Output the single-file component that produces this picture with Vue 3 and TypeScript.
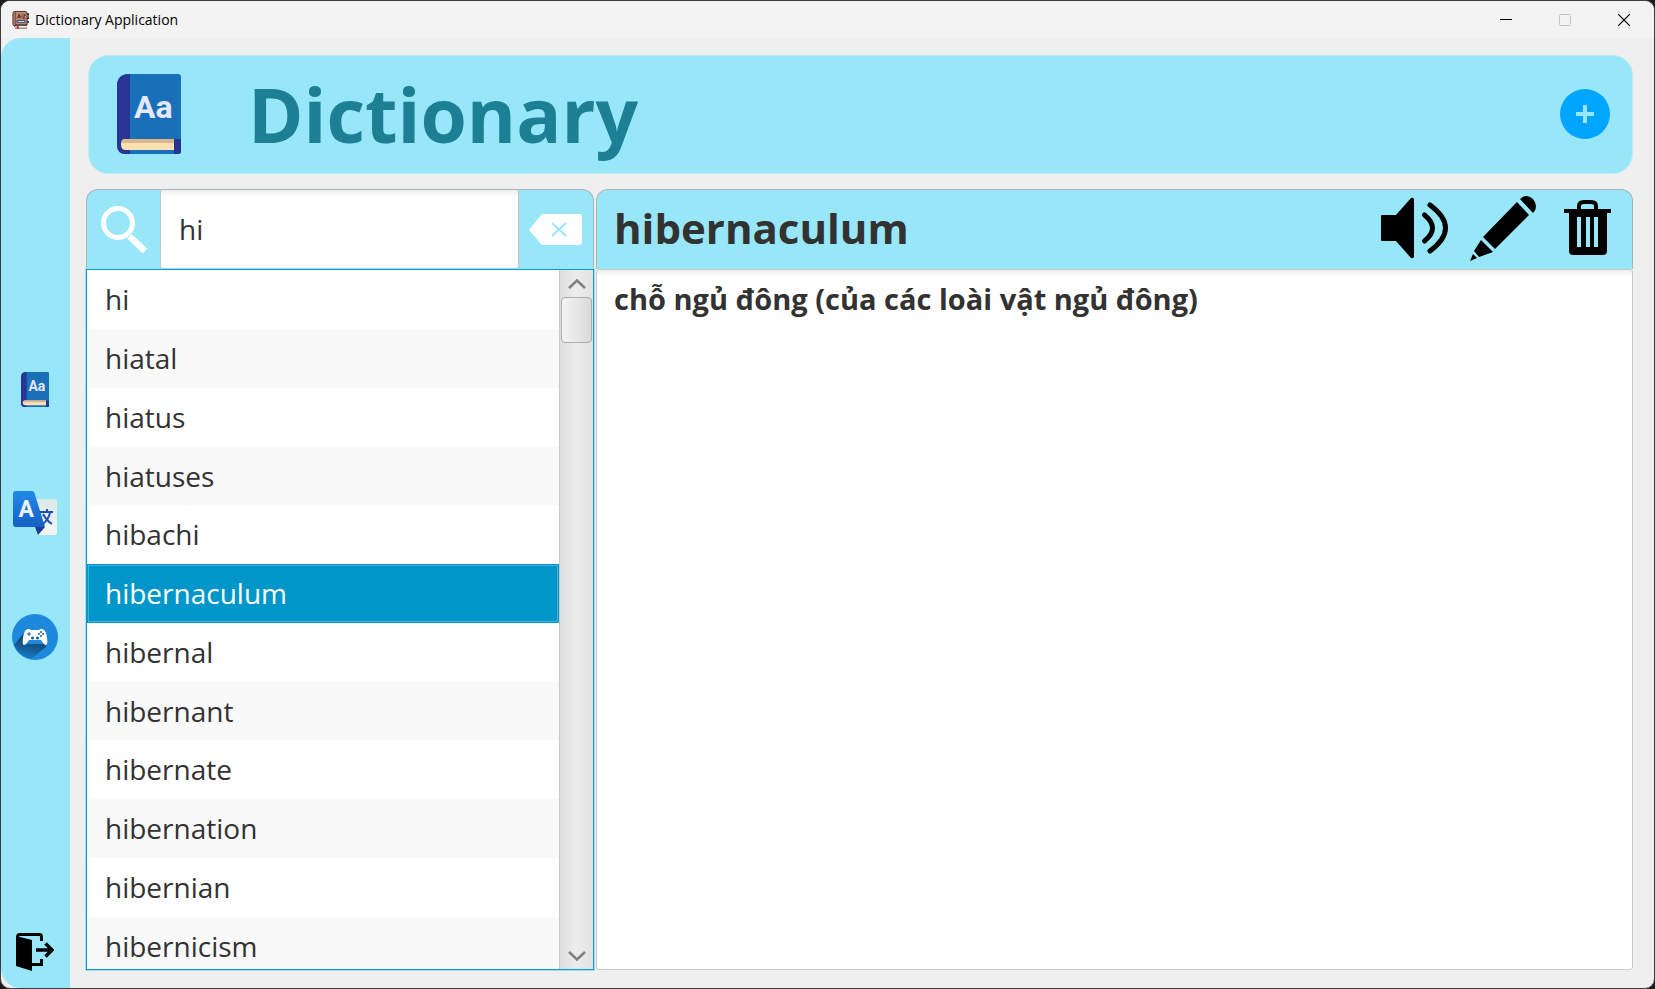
<script setup lang="ts">
import { computed, ref } from 'vue'

const query = ref('hi')
const selected = ref('hibernaculum')

const words: string[] = [
  'hi',
  'hiatal',
  'hiatus',
  'hiatuses',
  'hibachi',
  'hibernaculum',
  'hibernal',
  'hibernant',
  'hibernate',
  'hibernation',
  'hibernian',
  'hibernicism',
]

const meanings: Record<string, string> = {
  hibernaculum: 'chỗ ngủ đông (của các loài vật ngủ đông)',
}

const meaning = computed(() => meanings[selected.value] ?? '')
</script>

<template>
  <div class="window">
    <header class="titlebar">
      <svg class="app-icon" viewBox="0 0 20 20" aria-hidden="true">
        <rect width="20" height="20" fill="#fafafa" />
        <path d="M4 1h11q2 0 2 2v12H5q-1 0-1 2-2-1-2-3V3q0-2 2-2z" fill="#b98672" stroke="#4a2b25" />
        <path d="M4.500 1v14" stroke="#6d4237" />
        <path d="M17 4h2M17 8h2M17 12h2" stroke="#222" stroke-width="2" />
        <path d="M18 5h1v2h-1z" fill="#c2413f" />
        <path d="M7 8l1.500-4L10 8M7.500 7h2M10.500 6h1.500M12.500 4.500H15L12.500 8H15" fill="none" stroke="#4a2b25" />
        <rect x="6.500" y="10.500" width="8" height="2" fill="#d8ecff" stroke="#3a4a75" />
        <path d="M4 16h13M4 18.500h13" stroke="#4a2b25" />
        <path d="M5 17.200h11" stroke="#fff" />
        <path d="M6 16h2v3.500l-1-1-1 1z" fill="#b3263b" />
      </svg>
      <span class="app-name">Dictionary Application</span>
      <div class="window-buttons">
        <button type="button" aria-label="Minimize">
          <svg viewBox="0 0 12 12"><path d="M0 5.500h12" stroke="#000" /></svg>
        </button>
        <button type="button" aria-label="Maximize" disabled>
          <svg viewBox="0 0 12 12"><rect x=".5" y=".5" width="11" height="11" rx="1" fill="none" stroke="#c4c4c4" /></svg>
        </button>
        <button type="button" aria-label="Close">
          <svg viewBox="0 0 12 12"><path d="M.3.300l11.400 11.400M11.700.300L.3 11.700" stroke="#000" stroke-width="1.200" /></svg>
        </button>
      </div>
    </header>

    <div class="body">
      <aside class="sidebar">
        <nav class="nav">
          <button type="button" aria-label="Dictionary">
            <svg class="nav-book" viewBox="0 0 64 80" aria-hidden="true">
              <path d="M12 0h49q3 0 3 3v74q0 3-3 3H9q-9 0-9-9V12Q0 0 12 0z" fill="#1a70b8" />
              <path d="M13 0v65H8q-4 0-4 5t5 6h4v4H9q-9 0-9-9V12Q0 0 13 0zM57 65h7v12q0 3-3 3h-4z" fill="#283593" />
              <path d="M8 65h49v11H9q-5 0-5-5.500T8 65z" fill="#ffe0b2" />
              <path d="M8 65h49v4H4q1-4 4-4z" fill="#deb68d" />
              <text class="book-letters" x="17" y="44">Aa</text>
            </svg>
          </button>
          <button type="button" aria-label="Translate">
            <svg class="nav-translate" viewBox="0 0 44 44" aria-hidden="true">
              <defs>
                <linearGradient id="tr-blue" x1="0" y1="0" x2="0" y2="1">
                  <stop offset="0" stop-color="#218be8" />
                  <stop offset="1" stop-color="#1560c4" />
                </linearGradient>
                <linearGradient id="tr-paper" x1="0" y1="0" x2="0" y2="1">
                  <stop offset="0" stop-color="#dce8e8" />
                  <stop offset="1" stop-color="#f4f8f5" />
                </linearGradient>
              </defs>
              <path d="M20 8h22q2 0 2 2v32q0 2-2 2H25z" fill="url(#tr-paper)" />
              <path d="M22 36h10l-7 8z" fill="#173d9e" />
              <path d="M3 0h16q2 0 2.500 2L32 36H3q-3 0-3-3V3q0-3 3-3z" fill="url(#tr-blue)" />
              <path d="M27 21h13M34 18v3M30 23q3 6 9 10M37 22q-2 7-7 11" fill="none" stroke="#1c50b8" stroke-width="2" />
              <text class="translate-letter" x="5.500" y="26">A</text>
            </svg>
          </button>
          <button type="button" aria-label="Game">
            <svg class="nav-game" viewBox="0 0 46 46" aria-hidden="true">
              <defs>
                <linearGradient id="pad-shadow" x1=".5" y1=".2" x2=".3" y2="1">
                  <stop offset="0" stop-color="#0d3f68" />
                  <stop offset="1" stop-color="#1b7ecb" />
                </linearGradient>
              </defs>
              <circle cx="23" cy="23" r="23" fill="#1e88dc" />
              <path d="M12 30L35 30 34 33 19 45Q7 41 2 31L13 18z" fill="url(#pad-shadow)" />
              <path d="M14 16q3-2 5 0h8q2-2 5 0 2 1 3 8 1 7-1 7-2 0-5-5H17q-3 5-5 5-2 0-1-7 1-7 3-8z" fill="#fff" />
              <path d="M15 20h4M17 18v4" stroke="#175f99" stroke-width="1" />
              <g fill="#175f99">
                <circle cx="29" cy="18" r="1" /><circle cx="31" cy="20" r="1" />
                <circle cx="27" cy="20" r="1" /><circle cx="29" cy="22" r="1" />
                <circle cx="20.500" cy="24" r="1.500" /><circle cx="25.500" cy="24" r="1.500" />
              </g>
            </svg>
          </button>
        </nav>
        <button class="exit" type="button" aria-label="Exit">
          <svg viewBox="0 0 38 38" aria-hidden="true">
            <path d="M0 3l16 4v31L0 33z" />
            <path d="M1.500 4Q1.500 1.500 4 1.500h19.500Q25.500 1.500 25.500 4v4M16 31.500h9.500V26" fill="none" stroke="#000" stroke-width="3" />
            <path d="M20 17h15M29.500 10.500l6.500 6.500-6.500 6.500" fill="none" stroke="#000" stroke-width="3.500" />
          </svg>
        </button>
      </aside>

      <main class="main">
        <section class="banner">
          <svg class="banner-book" viewBox="0 0 64 80" aria-hidden="true">
            <path d="M12 0h49q3 0 3 3v74q0 3-3 3H9q-9 0-9-9V12Q0 0 12 0z" fill="#1a70b8" />
            <path d="M13 0v65H8q-4 0-4 5t5 6h4v4H9q-9 0-9-9V12Q0 0 13 0zM57 65h7v12q0 3-3 3h-4z" fill="#283593" />
            <path d="M8 65h49v11H9q-5 0-5-5.500T8 65z" fill="#ffe0b2" />
            <path d="M8 65h49v4H4q1-4 4-4z" fill="#deb68d" />
            <text class="book-letters" x="17" y="44">Aa</text>
          </svg>
          <h1>Dictionary</h1>
          <button class="add" type="button" aria-label="Add word">
            <svg viewBox="0 0 18 18"><path d="M0 9h18M9 0v18" stroke="#98e7f9" stroke-width="4" /></svg>
          </button>
        </section>

        <div class="panes">
          <section class="search-pane">
            <div class="search-bar">
              <label class="search-label" for="word-search" aria-label="Search">
                <svg viewBox="0 0 48 48" aria-hidden="true">
                  <circle cx="17" cy="17" r="14.500" fill="none" stroke="#fff" stroke-width="5" />
                  <path d="M28.500 30.500L44 45" stroke="#fff" stroke-width="6.500" />
                </svg>
              </label>
              <input id="word-search" v-model="query" type="text" autocomplete="off" />
              <button class="clear" type="button" aria-label="Clear" @click="query = ''">
                <svg viewBox="0 0 53 31" aria-hidden="true">
                  <path d="M13 0h37q3 0 3 3v25q0 3-3 3H13L0 16z" fill="#fff" />
                  <path d="M23 9l14 13M37 9L23 22" stroke="#98e7f9" stroke-width="2" />
                </svg>
              </button>
            </div>
            <div class="results">
              <ul>
                <li v-for="word in words" :key="word">
                  <button type="button" :class="{ active: word === selected }" @click="selected = word">{{ word }}</button>
                </li>
              </ul>
              <div class="scrollbar">
                <button type="button" aria-label="Scroll up">
                  <svg viewBox="0 0 18 10"><path d="M1 9l8-7.500L17 9" fill="none" stroke="#808080" stroke-width="2.500" /></svg>
                </button>
                <div class="track"><div class="thumb"></div></div>
                <button type="button" aria-label="Scroll down">
                  <svg viewBox="0 0 18 10"><path d="M1 1l8 7.500L17 1" fill="none" stroke="#808080" stroke-width="2.500" /></svg>
                </button>
              </div>
            </div>
          </section>

          <article class="entry">
            <div class="entry-head">
              <h2>{{ selected }}</h2>
              <div class="actions">
                <button type="button" aria-label="Listen">
                  <svg class="speaker" viewBox="0 0 67 62" aria-hidden="true">
                    <path d="M1 18h14L30 1q3-1 3 2v56q0 3-3 2L15 44H1q-1 0-1-1V19q0-1 1-1z" />
                    <path d="M43.500 18q16 13 0 26M49 8q31 23 0 46" fill="none" stroke="#000" stroke-width="5" stroke-linecap="round" />
                  </svg>
                </button>
                <button type="button" aria-label="Edit">
                  <svg class="pencil" viewBox="0 0 66 66" aria-hidden="true">
                    <path d="M50 4q6-6 13 0 6 8 0 14L50 4z" />
                    <path d="M47 7l12 13-34 34L13 42z" />
                    <path d="M11 45l12 12-14 5-5-6z" />
                    <path d="M3 59l4 4-7 3z" />
                  </svg>
                </button>
                <button type="button" aria-label="Delete">
                  <svg class="trash" viewBox="0 0 47 55" aria-hidden="true">
                    <path d="M15 10V6q0-4 5-4h7q5 0 5 4v4" fill="none" stroke="#000" stroke-width="4" />
                    <path d="M0 9h47v4h-4v38q0 4-4 4H9q-4 0-4-4V13H0z" />
                    <path d="M15 17v30M24 17v30M32 17v30" stroke="#98e7f9" stroke-width="4" />
                  </svg>
                </button>
              </div>
            </div>
            <p class="meaning">{{ meaning }}</p>
          </article>
        </div>
      </main>
    </div>
  </div>
</template>

<style>
html,
body {
  margin: 0;
  background: #1c1a1c;
}
</style>

<style scoped>
* {
  box-sizing: border-box;
}

.window {
  display: flex;
  flex-direction: column;
  height: 100vh;
  overflow: hidden;
  border: 1px solid #3f3c3f;
  border-radius: 10px;
  background: #efefef;
  color: #323232;
  font-family: 'Open Sans', 'Noto Sans', sans-serif;
}

button {
  display: flex;
  align-items: center;
  justify-content: center;
  padding: 0;
  border: 0;
  background: none;
  font: inherit;
  color: inherit;
}

svg {
  display: block;
}

.titlebar {
  display: flex;
  flex: none;
  align-items: center;
  height: 37px;
  padding: 0 1px 0 10px;
  background: #f3f3f3;
  color: #000;
}

.app-icon {
  width: 19px;
  height: 20px;
}

.app-name {
  margin-left: 5px;
  font-size: 14px;
  line-height: 20px;
}

.window-buttons {
  display: flex;
  margin-left: auto;
}

.window-buttons button {
  width: 59px;
  height: 37px;
}

.window-buttons svg {
  width: 12px;
  height: 12px;
}

.body {
  display: flex;
  flex: 1;
  min-height: 0;
}

.sidebar {
  display: grid;
  flex: none;
  grid-template-rows: 1fr auto 1fr;
  justify-items: center;
  width: 69px;
  border-radius: 20px 0 0 20px;
  padding-right: 1px;
  background: #98e7f9;
}

.nav {
  display: flex;
  grid-row: 2;
  flex-direction: column;
  gap: 78px;
}

.nav button {
  width: 46px;
  height: 46px;
}

.nav-book {
  width: 28px;
  height: 35px;
}

.nav-translate {
  width: 44px;
  height: 44px;
}

.nav-game {
  width: 46px;
  height: 46px;
}

.book-letters {
  fill: #e3e8fa;
  font-family: Roboto, sans-serif;
  font-size: 32px;
  font-weight: 700;
}

.translate-letter {
  fill: #eef2f7;
  font-family: Roboto, sans-serif;
  font-size: 23px;
  font-weight: 700;
}

.exit {
  grid-row: 3;
  align-self: end;
  margin-bottom: 17px;
}

.exit svg {
  width: 38px;
  height: 38px;
}

.main {
  display: flex;
  flex: 1;
  flex-direction: column;
  gap: 15px;
  min-width: 0;
  padding: 17px 21px 18px 16px;
}

.banner {
  display: flex;
  flex: none;
  align-items: center;
  height: 119px;
  margin-left: 2px;
  padding: 0 22px 2px 28px;
  border: 1px solid #c3ebf5;
  border-radius: 20px;
  background: #98e7f9;
}

.banner-book {
  width: 64px;
  height: 80px;
}

h1 {
  margin: 0 0 0 67px;
  color: #1c7f94;
  font-size: 75px;
  font-weight: 700;
  line-height: 102px;
}

.add {
  width: 50px;
  height: 50px;
  margin-left: auto;
  border-radius: 50%;
  background: #00a5ff;
}

.add svg {
  width: 18px;
  height: 18px;
}

.panes {
  display: grid;
  flex: 1;
  grid-template-columns: 508px 1fr;
  gap: 2px;
  min-height: 0;
}

.search-pane,
.entry {
  display: flex;
  flex-direction: column;
  min-width: 0;
  min-height: 0;
}

.search-bar,
.entry-head {
  display: flex;
  flex: none;
  align-items: center;
  height: 80px;
  border: 1px solid #a9b4b8;
  border-bottom: 0;
  border-radius: 12px 12px 0 0;
  background: #98e7f9;
}

.search-label {
  display: flex;
  flex: none;
  align-items: center;
  justify-content: center;
  width: 73px;
  padding-left: 2px;
}

.search-label svg {
  width: 48px;
  height: 48px;
}

input {
  flex: 1;
  min-width: 0;
  height: 79px;
  padding: 0 18px;
  border: 1px solid #c4c4c4;
  border-top: 0;
  border-radius: 3px;
  outline: 0;
  background: linear-gradient(#ececec, #fff 6px);
  color: inherit;
  font: inherit;
  font-size: 28px;
}

.clear {
  flex: none;
  width: 74px;
  height: 79px;
  padding-right: 2px;
}

.clear svg {
  width: 53px;
  height: 31px;
}

.results {
  display: flex;
  flex: 1;
  min-height: 0;
  border: 1px solid #039ed3;
  box-shadow: 0 0 0 1px #a5dcee;
  background: #fff;
}

ul {
  flex: 1;
  margin: 0;
  padding: 0;
  overflow: hidden;
  list-style: none;
}

li {
  display: flex;
  height: 59px;
}

li:nth-child(4n) {
  height: 58px;
}

li:nth-child(even) {
  background: #f9f9f9;
}

li button {
  flex: 1;
  justify-content: flex-start;
  padding: 0 18px 1px;
  font-size: 28px;
  line-height: 38px;
}

li .active {
  border: 1px solid #0096c9;
  padding: 0 17px 1px;
  background: #0096c9;
  box-shadow: inset 0 0 0 1px #45b1d7;
  color: #fff;
}

.scrollbar {
  display: flex;
  flex: none;
  flex-direction: column;
  width: 34px;
  padding: 0 1px;
  border-left: 1px solid #c9c9c9;
  background: linear-gradient(90deg, #dedede, #ececec 50%, #e2e2e2);
}

.scrollbar button {
  flex: none;
  height: 27px;
}

.scrollbar svg {
  width: 18px;
  height: 10px;
}

.track {
  flex: 1;
}

.thumb {
  height: 46px;
  border: 1px solid #aeaeae;
  border-radius: 4px;
  background: linear-gradient(90deg, #f3f3f3, #dadada);
}

.entry-head {
  padding: 0 21px 4px 17px;
}

h2 {
  margin: 0;
  font-size: 42px;
  font-weight: 700;
  line-height: 58px;
}

.actions {
  display: flex;
  align-items: center;
  margin-left: auto;
}

.speaker {
  width: 67px;
  height: 62px;
}

.pencil {
  width: 66px;
  height: 66px;
  margin: 0 28px 0 22px;
}

.trash {
  width: 47px;
  height: 55px;
}

.meaning {
  flex: 1;
  margin: 0;
  padding: 10px 17px;
  border: 1px solid #cacaca;
  border-radius: 3px;
  background: linear-gradient(#ececec, #fff 6px);
  font-size: 29px;
  font-weight: 700;
  line-height: 38px;
}
</style>
